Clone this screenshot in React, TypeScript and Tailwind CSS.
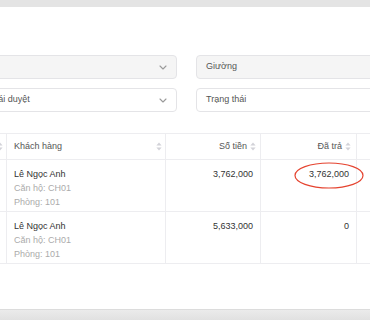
import React from "react";

function SortIcon() {
  return (
    <svg width="6" height="9" viewBox="0 0 6 9" className="shrink-0">
      <path d="M3 0.5 L5.6 3.6 L0.4 3.6 Z" fill="#d2d2d8" />
      <path d="M3 8.5 L5.6 5.4 L0.4 5.4 Z" fill="#d2d2d8" />
    </svg>
  );
}

function Chevron() {
  return (
    <svg width="8" height="5" viewBox="0 0 8 5" className="shrink-0">
      <path d="M1 1 L4 4 L7 1" fill="none" stroke="#9a9a9a" strokeWidth="1.1" strokeLinecap="round" strokeLinejoin="round" />
    </svg>
  );
}

function Select({ text, gray, chevron }: { text?: string; gray?: boolean; chevron?: boolean }) {
  return (
    <div
      className={`h-[24px] rounded-[4px] border border-[#e4e4e7] flex items-center justify-between pl-[9px] pr-[9px] ${gray ? "bg-[#f5f5f5]" : "bg-white"}`}
    >
      <span className="text-[9px] text-[#555] whitespace-nowrap">{text}</span>
      {chevron && <Chevron />}
    </div>
  );
}

const rows = [
  { name: "Lê Ngọc Anh", apt: "Căn hộ: CH01", room: "Phòng: 101", amount: "3,762,000", paid: "3,762,000", circled: true },
  { name: "Lê Ngọc Anh", apt: "Căn hộ: CH01", room: "Phòng: 101", amount: "5,633,000", paid: "0", circled: false },
];

export default function App() {
  return (
    <div className="w-[370px] h-[320px] bg-white overflow-hidden" style={{ fontFamily: '"Liberation Sans", Arial, sans-serif' }}>
      <div className="h-[7px] bg-[#e4e4e4]" />
      <div className="h-[302px] overflow-hidden">
        <div className="pt-[48px] overflow-hidden w-[370px]">
          <div className="-ml-[45px] w-[800px] grid grid-cols-[222px_500px] gap-x-[19px] gap-y-[9px]">
            <Select gray chevron />
            <Select gray text="Giường" />
            <Select text="Trạng thái duyệt" chevron />
            <Select text="Trạng thái" />
          </div>
        </div>
        <div className="mt-[21px] border-t border-[#ededf0] grid grid-cols-[7px_159px_95px_96px_13px] text-[9px]">
          <div className="h-[26px] border-b border-r border-[#ededf0] flex items-center justify-end pr-[3px] -ml-[4px]">
            <SortIcon />
          </div>
          <div className="h-[26px] border-b border-r border-[#ededf0] flex items-center justify-between pl-[7px] pr-[3px] text-[#555]">
            <span>Khách hàng</span>
            <SortIcon />
          </div>
          <div className="h-[26px] border-b border-r border-[#ededf0] flex items-center justify-end gap-[3px] pr-[4px] text-[#555]">
            <span>Số tiền</span>
            <SortIcon />
          </div>
          <div className="h-[26px] border-b border-r border-[#ededf0] flex items-center justify-end gap-[3px] pr-[5px] text-[#555]">
            <span>Đã trả</span>
            <SortIcon />
          </div>
          <div className="h-[26px] border-b border-[#ededf0]" />
          {rows.map((r, i) => (
            <React.Fragment key={i}>
              <div className="h-[52px] border-b border-r border-[#ededf0]" />
              <div className="h-[52px] border-b border-r border-[#ededf0] pl-[7px] pt-[7px] leading-[14px]">
                <div className="text-[#333]">{r.name}</div>
                <div className="text-[#ababab]">{r.apt}</div>
                <div className="text-[#ababab]">{r.room}</div>
              </div>
              <div className="h-[52px] border-b border-r border-[#ededf0] pr-[7px] pt-[7px] leading-[14px] text-right text-[#333]">
                {r.amount}
              </div>
              <div className="h-[52px] border-b border-r border-[#ededf0] pr-[7px] pt-[7px] leading-[14px] text-right text-[#333] relative">
                {r.paid}
                {r.circled && (
                  <svg className="absolute left-[33px] top-[2px] overflow-visible" width="70" height="27" viewBox="0 0 70 27">
                    <ellipse cx="35" cy="13.5" rx="34" ry="12.5" fill="none" stroke="#e5432f" strokeWidth="1.2" />
                  </svg>
                )}
              </div>
              <div className="h-[52px] border-b border-[#ededf0]" />
            </React.Fragment>
          ))}
        </div>
      </div>
      <div className="h-[11px] border-t border-[#dcdcdc] bg-gradient-to-b from-[#ebebeb] to-[#e1e1e1]" />
    </div>
  );
}
